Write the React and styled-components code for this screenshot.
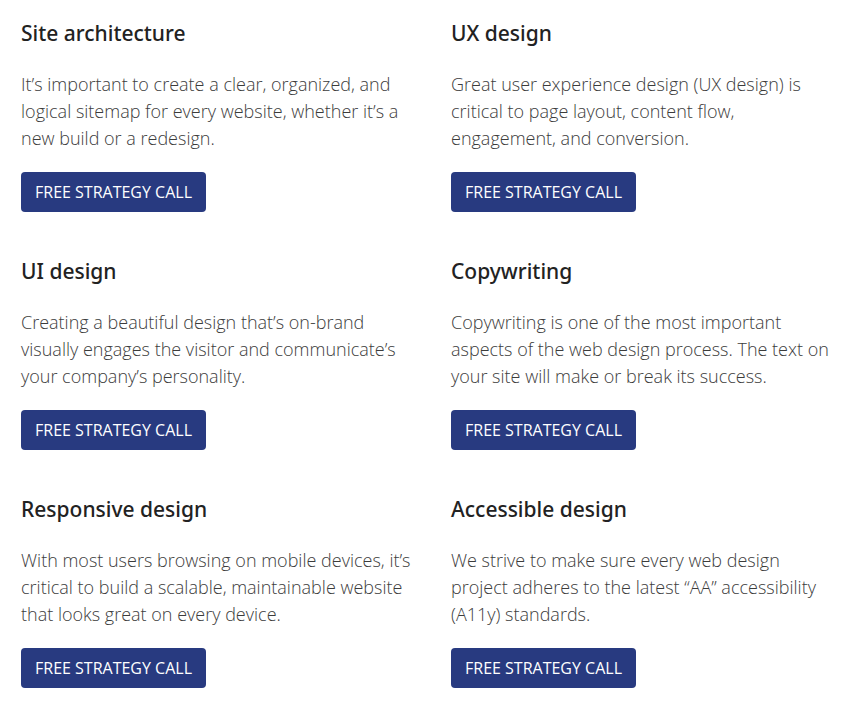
import React from "react";
import styled, { createGlobalStyle } from "styled-components";

const services = [
  {
    title: "Site architecture",
    text: "It’s important to create a clear, organized, and logical sitemap for every website, whether it’s a new build or a redesign.",
  },
  {
    title: "UX design",
    text: "Great user experience design (UX design) is critical to page layout, content flow, engagement, and conversion.",
  },
  {
    title: "UI design",
    text: "Creating a beautiful design that’s on-brand visually engages the visitor and communicate’s your company’s personality.",
  },
  {
    title: "Copywriting",
    text: "Copywriting is one of the most important aspects of the web design process. The text on your site will make or break its success.",
  },
  {
    title: "Responsive design",
    text: "With most users browsing on mobile devices, it’s critical to build a scalable, maintainable website that looks great on every device.",
  },
  {
    title: "Accessible design",
    text: "We strive to make sure every web design project adheres to the latest “AA” accessibility (A11y) standards.",
  },
];

export default function App() {
  return (
    <>
      <GlobalStyle />
      <Grid>
        {services.map((s) => (
          <Card key={s.title}>
            <Title>{s.title}</Title>
            <Text>{s.text}</Text>
            <CallButton type="button">FREE STRATEGY CALL</CallButton>
          </Card>
        ))}
      </Grid>
    </>
  );
}

const GlobalStyle = createGlobalStyle`
  body {
    margin: 0;
    background: #fff;
    font-family: "Open Sans", sans-serif;
  }
`;

const Grid = styled.div`
  display: grid;
  grid-template-columns: 390px 390px;
  column-gap: 40px;
  row-gap: 44px;
  padding: 18px 21px 0;
`;

const Card = styled.div`
  display: flex;
  flex-direction: column;
  align-items: flex-start;
`;

const Title = styled.h3`
  margin: 0;
  font-family: "Noto Sans", sans-serif;
  font-weight: 500;
  font-size: 21px;
  line-height: 30px;
  color: #222;
`;

const Text = styled.p`
  margin: 23px 0 0;
  font-family: "Open Sans", sans-serif;
  font-weight: 300;
  font-size: 18px;
  line-height: 27px;
  color: #3c3c3c;
`;

const CallButton = styled.button`
  margin-top: 20px;
  height: 40px;
  padding: 0 14px;
  border: none;
  border-radius: 4px;
  background: #283a80;
  color: #fff;
  font-family: "Open Sans", sans-serif;
  font-size: 16px;
  font-weight: 400;
  cursor: pointer;
`;
